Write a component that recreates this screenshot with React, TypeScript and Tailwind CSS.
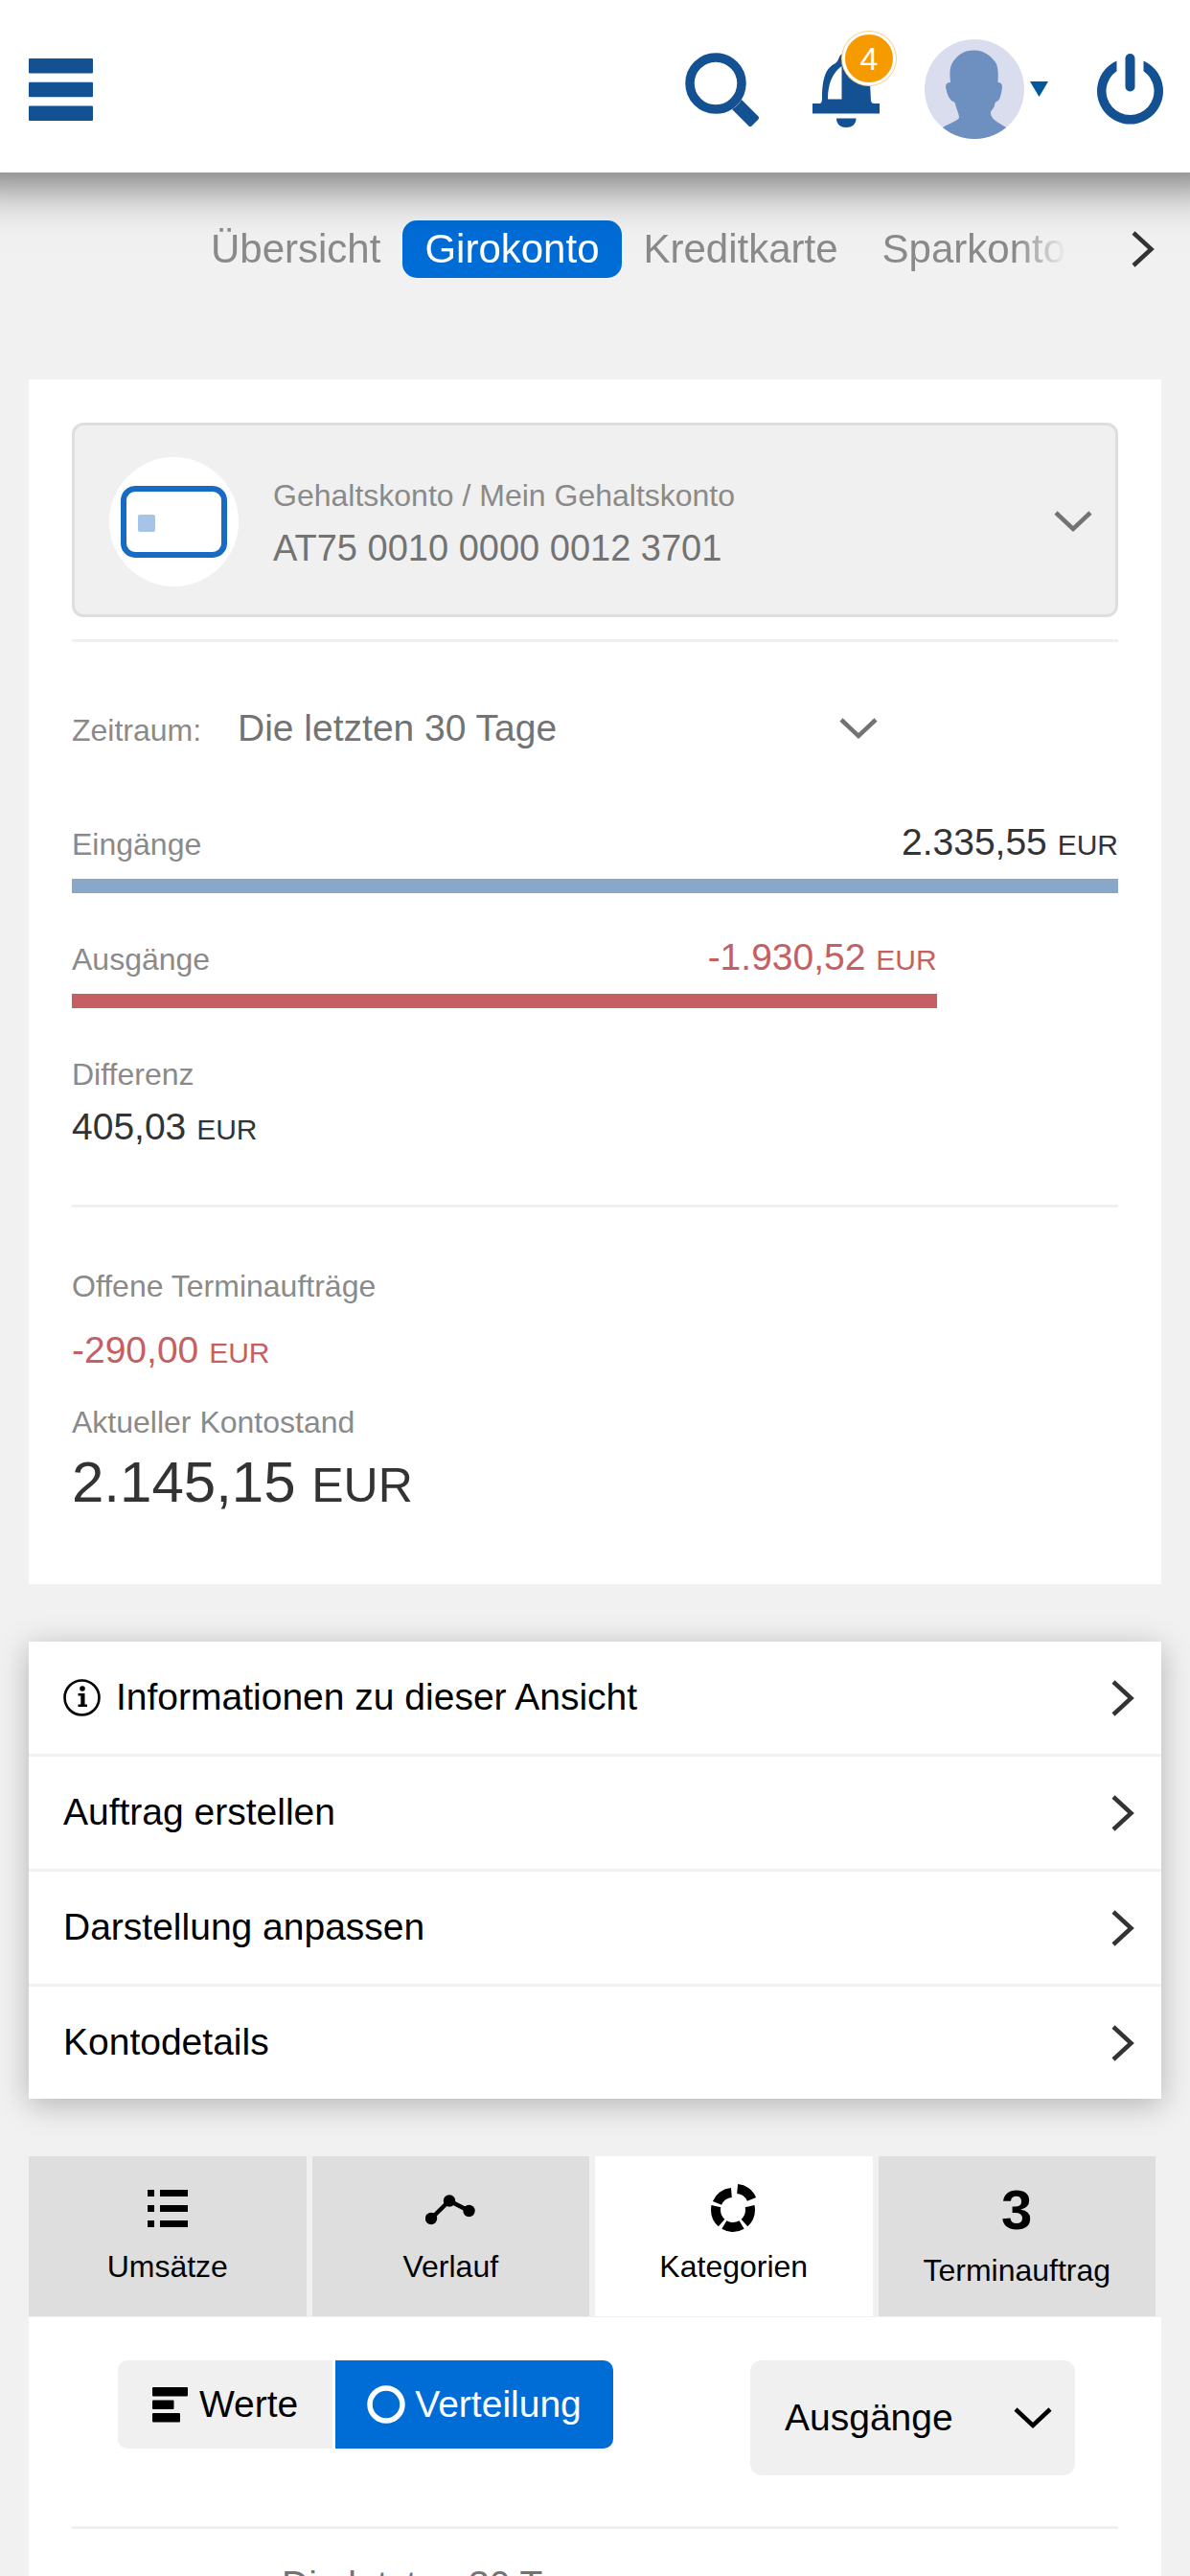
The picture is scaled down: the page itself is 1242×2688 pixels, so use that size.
import React from "react";

const accountTabs = ["Übersicht", "Girokonto", "Kreditkarte", "Sparkonto"];

const menuItems = [
  "Informationen zu dieser Ansicht",
  "Auftrag erstellen",
  "Darstellung anpassen",
  "Kontodetails",
];

const income = 2335.55;
const expenses = 1930.52;

function ChevronRight() {
  return (
    <svg width="24" height="38" viewBox="0 0 24 38" className="shrink-0" aria-hidden="true">
      <path d="M2 2 L20.5 19 L2 36" fill="none" stroke="#333" strokeWidth="4.5" />
    </svg>
  );
}

function ChevronDown() {
  return (
    <svg width="40" height="23" viewBox="0 0 40 23" className="shrink-0" aria-hidden="true">
      <path d="M2 2 L20 19 L38 2" fill="none" stroke="currentColor" strokeWidth="4.5" />
    </svg>
  );
}

function Header() {
  return (
    <header className="relative z-10 flex min-h-[180px] items-center bg-white pt-1.5 pr-7 pl-[30px] text-[#145192] shadow-[0_-36px_48px_48px_rgba(0,0,0,0.55)]">
      <button aria-label="Menü" className="mr-auto cursor-pointer">
        <svg width="67" height="65" viewBox="0 0 67 65" fill="currentColor">
          <rect y="0" width="67" height="15.5" rx="1" />
          <rect y="24.75" width="67" height="15.5" rx="1" />
          <rect y="49.5" width="67" height="15.5" rx="1" />
        </svg>
      </button>

      <button aria-label="Suche" className="mr-14 cursor-pointer">
        <svg width="77" height="77" viewBox="0 0 77 77">
          <circle cx="32" cy="32" r="27" fill="none" stroke="currentColor" strokeWidth="9.5" />
          <path
            d="M59 49 L76.5 66.5 Q77.5 68 76.5 69.5 L69.5 76.5 Q68 77.5 66.5 76.5 L49 59 Q55 55.5 59 49 Z"
            fill="currentColor"
          />
        </svg>
      </button>

      <button aria-label="Benachrichtigungen" className="relative mr-[47px] cursor-pointer">
        <svg width="70" height="80" viewBox="0 0 70 80" fill="currentColor">
          <path
            fillRule="evenodd"
            d="M0 55 H8 Q10 54 10 50 C10 28 14 18 24 13 C28 10 27 5 31 3 V0 H42 C44 10 60 14 60 34 L61 52 Q61.500 55 64 55 H70 V65.500 H0 Z M16 50.500 H30.500 V16 C21 23 16 34 16 50.500 Z"
          />
          <path d="M25 70.500 H45.500 C45.500 77 41 80 35 80 C29.500 80 25 77 25 70.500 Z" />
        </svg>
        <span className="absolute -top-5 left-[31px] flex size-14 items-center justify-center rounded-full border-3 border-white bg-[#f59b00] text-[34px] text-white shadow-[0_0_0_1px_#f9d08a]">
          4
        </span>
      </button>

      <button aria-label="Profil" className="mr-[51px] flex cursor-pointer items-center gap-1.5">
        <svg width="104" height="104" viewBox="0 0 104 104">
          <defs>
            <clipPath id="avatar">
              <circle cx="52" cy="52" r="52" />
            </clipPath>
          </defs>
          <circle cx="52" cy="52" r="52" fill="#dadded" />
          <path
            clipPath="url(#avatar)"
            fill="#6e90c1"
            d="M51.500 11.500 C64 11.500 70 19 74 24 C77 29 77 36 76.500 45 Q81 45 81 50 C80 57 79 64 75 65 Q73 66 73 69 C72 73 69 74 69 77 C69 84 78 87 85 92 V104 H19 V92 C25 88 33 86 36 82 C36 77 33 73 32 67 Q31 65 28 64 C25 61 23 56 22 50 Q22 45 27 45 C26 35 26 28 30 23 C35 16 41 11.500 51.500 11.500 Z"
          />
        </svg>
        <svg width="19" height="16" viewBox="0 0 19 16">
          <path d="M0 0 H19 L9.500 16 Z" fill="#00589c" />
        </svg>
      </button>

      <button aria-label="Abmelden" className="cursor-pointer">
        <svg width="69" height="74" viewBox="0 0 69 74" fill="currentColor">
          <path d="M20.500 7.500 A34.500 34.500 0 1 0 48.500 7.500 V18.300 A25 25 0 1 1 20.500 18.300 Z" />
          <rect x="29.500" y="0" width="10" height="39.500" rx="5" />
        </svg>
      </button>
    </header>
  );
}

function AccountNav() {
  return (
    <div className="flex items-center pt-[50px] pb-[106px] pl-[197px]">
      <nav className="flex min-w-0 flex-1 overflow-hidden [mask-image:linear-gradient(to_right,black_calc(100%_-_52px),transparent)]">
        {accountTabs.map((tab) => (
          <a
            key={tab}
            href="#"
            className={
              tab === "Girokonto"
                ? "rounded-[15px] bg-[#006cd6] px-[23px] text-[42px] leading-[60px] text-white"
                : "px-[23px] text-[42px] leading-[60px] text-[#8a8a8a]"
            }
          >
            {tab}
          </a>
        ))}
      </nav>
      <button aria-label="Weiter" className="mr-[37px] ml-[68px] cursor-pointer">
        <ChevronRight />
      </button>
    </div>
  );
}

function Label({ children }: { children: React.ReactNode }) {
  return <p className="text-[32px] leading-[42px] text-[#8a8a8a]">{children}</p>;
}

function Amount({ value }: { value: string }) {
  return (
    <p className="text-[39px] leading-[48px]">
      {value} <span className="text-[30px] leading-none">EUR</span>
    </p>
  );
}

function AccountSummary() {
  return (
    <section className="bg-white px-[45px] pt-[45px] pb-[70px] text-[#333]">
      {/* Account selector */}
      <button className="flex min-h-[203px] w-full cursor-pointer items-center rounded-xl border-3 border-[#dedede] bg-[#f0f0f0] pt-1 pr-6 pl-9 text-left text-[#737373]">
        <svg width="135" height="135" viewBox="0 0 135 135" className="mr-9 shrink-0">
          <circle cx="67.5" cy="67.5" r="67.5" fill="#fff" />
          <rect x="15" y="33" width="105" height="69" rx="12" fill="none" stroke="#186bc3" strokeWidth="6" />
          <rect x="30" y="60" width="18" height="18" rx="2" fill="#a5c4e7" />
        </svg>
        <span className="flex-1">
          <span className="block text-[32px] leading-[55px] text-[#8a8a8a]">
            Gehaltskonto / Mein Gehaltskonto
          </span>
          <span className="block text-[38px] leading-[55px]">AT75 0010 0000 0012 3701</span>
        </span>
        <ChevronDown />
      </button>

      <hr className="mt-[23px] border-t-3 border-[#f0f0f0]" />

      {/* Period */}
      <div className="mt-[60px] flex items-baseline">
        <label htmlFor="period" className="w-[173px] text-[32px] text-[#8a8a8a]">
          Zeitraum:
        </label>
        <div className="grid w-[668px] items-center text-[#737373]">
          <select
            id="period"
            className="col-start-1 row-start-1 h-[60px] w-full appearance-none bg-transparent text-[39px] leading-[60px]"
          >
            <option>Die letzten 30 Tage</option>
          </select>
          <span className="pointer-events-none col-start-1 row-start-1 justify-self-end">
            <ChevronDown />
          </span>
        </div>
      </div>

      {/* Income and expenses */}
      <div className="mt-[65px]">
        <div className="flex items-baseline justify-between">
          <Label>Eingänge</Label>
          <Amount value="2.335,55" />
        </div>
        <div className="mt-3.5 h-[15px] bg-[#89a7c8]" />
      </div>
      <div className="mt-[43px]" style={{ width: `${(expenses / income) * 100}%` }}>
        <div className="flex items-baseline justify-between">
          <Label>Ausgänge</Label>
          <div className="text-[#c46064]">
            <Amount value="-1.930,52" />
          </div>
        </div>
        <div className="mt-3.5 h-[15px] bg-[#c46064]" />
      </div>

      <div className="mt-12 flex flex-col gap-2.5">
        <Label>Differenz</Label>
        <Amount value="405,03" />
      </div>

      <hr className="mt-[57px] border-t-3 border-[#f0f0f0]" />

      {/* Balance */}
      <div className="mt-[61px] flex flex-col gap-[22px]">
        <Label>Offene Terminaufträge</Label>
        <div className="text-[#c46064]">
          <Amount value="-290,00" />
        </div>
      </div>
      <div className="mt-[30px] flex flex-col gap-1.5">
        <Label>Aktueller Kontostand</Label>
        <p className="text-[60px] leading-[72px]">
          2.145,15 <span className="text-[50px] leading-none">EUR</span>
        </p>
      </div>
    </section>
  );
}

function ActionMenu() {
  return (
    <section className="mt-[60px] divide-y-3 divide-[#f0f0f0] bg-white shadow-[0_6px_30px_rgba(0,0,0,0.26)]">
      {menuItems.map((item, i) => (
        <button
          key={item}
          className="box-content flex h-[117px] w-[calc(100%-64px)] cursor-pointer items-center pr-7 pl-9 text-left text-[39px] text-black"
        >
          {i === 0 && (
            <svg width="39" height="39" viewBox="0 0 39 39" className="mr-4">
              <circle cx="19.5" cy="19.5" r="18" fill="none" stroke="#000" strokeWidth="2.6" />
              <circle cx="20" cy="10" r="2.8" />
              <path d="M15.500 15 H22.500 V26.500 H25 V29 H15.500 V26.500 H18.300 V17.500 H15.500 Z" />
            </svg>
          )}
          <span className="flex-1">{item}</span>
          <ChevronRight />
        </button>
      ))}
    </section>
  );
}

function ListIcon() {
  return (
    <svg width="42" height="54" viewBox="0 0 42 54">
      <path d="M0 8 H7 V15 H0 Z M13 8 H42 V15 H13 Z M0 24 H7 V31 H0 Z M13 24 H42 V31 H13 Z M0 40 H7 V47 H0 Z M13 40 H42 V47 H13 Z" />
    </svg>
  );
}

function HistoryIcon() {
  return (
    <svg width="52" height="54" viewBox="0 0 52 54">
      <path d="M6 38 L25 19.500 L45.500 30" fill="none" stroke="#000" strokeWidth="4.5" />
      <circle cx="6" cy="38" r="6.2" />
      <circle cx="25" cy="19.500" r="6.2" />
      <circle cx="45.500" cy="30" r="6.2" />
    </svg>
  );
}

function CategoriesIcon() {
  return (
    <svg width="50" height="54" viewBox="0 0 50 54" fill="none" stroke="#000" strokeWidth="10">
      {/* ring in five pieces, the first one pulled outwards */}
      <circle cx="24" cy="29" r="18" pathLength="100" strokeDasharray="17 83" strokeDashoffset="-21.500" transform="rotate(-90 24 29)" />
      <circle cx="24" cy="29" r="18" pathLength="100" strokeDasharray="17 83" strokeDashoffset="-41.500" transform="rotate(-90 24 29)" />
      <circle cx="24" cy="29" r="18" pathLength="100" strokeDasharray="17 83" strokeDashoffset="-61.500" transform="rotate(-90 24 29)" />
      <circle cx="24" cy="29" r="18" pathLength="100" strokeDasharray="17 83" strokeDashoffset="-81.500" transform="rotate(-90 24 29)" />
      <circle cx="27" cy="25" r="18" pathLength="100" strokeDasharray="17 83" strokeDashoffset="-1.500" transform="rotate(-90 27 25)" />
    </svg>
  );
}

function ViewTabs() {
  const tab =
    "flex h-[168px] cursor-pointer flex-col items-center border-b border-[#f1f1f1] bg-[#dedede] pt-[27px] text-[32px] leading-[48px]";
  return (
    <div role="tablist" className="mt-[60px] grid grid-cols-4 gap-1.5 pr-1.5 text-black">
      <button role="tab" className={tab}>
        <ListIcon />
        <span className="mt-2.5">Umsätze</span>
      </button>
      <button role="tab" className={tab}>
        <HistoryIcon />
        <span className="mt-2.5">Verlauf</span>
      </button>
      <button
        role="tab"
        aria-selected="true"
        className="flex h-[168px] cursor-pointer flex-col items-center border-b border-[#f1f1f1] bg-white pt-[27px] text-[32px] leading-[48px]"
      >
        <CategoriesIcon />
        <span className="mt-2.5">Kategorien</span>
      </button>
      <button role="tab" className={tab}>
        <span className="text-[58px] leading-[58px] font-bold">3</span>
        <span className="mt-2.5">Terminauftrag</span>
      </button>
    </div>
  );
}

function Categories() {
  return (
    <section className="bg-white px-[45px] pt-[45px] pb-[60px] text-black">
      <div className="flex items-start justify-between pr-[45px] pl-12 text-[39px]">
        <div className="flex gap-[3px]">
          <button className="flex h-[92px] cursor-pointer items-center gap-3 rounded-l-[10px] bg-[#f0f0f0] px-9">
            <svg width="37" height="37" viewBox="0 0 37 37">
              <rect width="37" height="9.500" rx="1" />
              <rect y="13.500" width="22.500" height="9.500" rx="1" />
              <rect y="27" width="29" height="9.500" rx="1" />
            </svg>
            Werte
          </button>
          <button className="flex h-[92px] cursor-pointer items-center gap-2.5 rounded-r-[10px] bg-[#006cd6] px-[33px] text-white">
            <svg width="40" height="40" viewBox="0 0 40 40">
              <circle cx="20" cy="20" r="17" fill="none" stroke="currentColor" strokeWidth="5.500" />
            </svg>
            Verteilung
          </button>
        </div>

        <div className="grid w-[339px] items-center">
          <select
            aria-label="Art der Umsätze"
            className="col-start-1 row-start-1 h-[120px] w-full appearance-none rounded-xl bg-[#f0f0f0] pl-9 text-[39px]"
          >
            <option>Ausgänge</option>
          </select>
          <span className="pointer-events-none col-start-1 row-start-1 mr-6 justify-self-end">
            <ChevronDown />
          </span>
        </div>
      </div>

      <hr className="mt-[53px] border-t-3 border-[#f0f0f0]" />

      <h2 className="mt-[34px] pl-[219px] text-[39px] leading-[48px] text-[#737373]">Die letzten 30 Tage</h2>
    </section>
  );
}

export default function App() {
  return (
    <div className="h-screen overflow-y-auto bg-[#f1f1f1] font-['Liberation_Sans',Arial,sans-serif] [scrollbar-width:none]">
      <Header />
      <AccountNav />
      <main className="px-[30px]">
        <AccountSummary />
        <ActionMenu />
        <ViewTabs />
        <Categories />
      </main>
    </div>
  );
}
